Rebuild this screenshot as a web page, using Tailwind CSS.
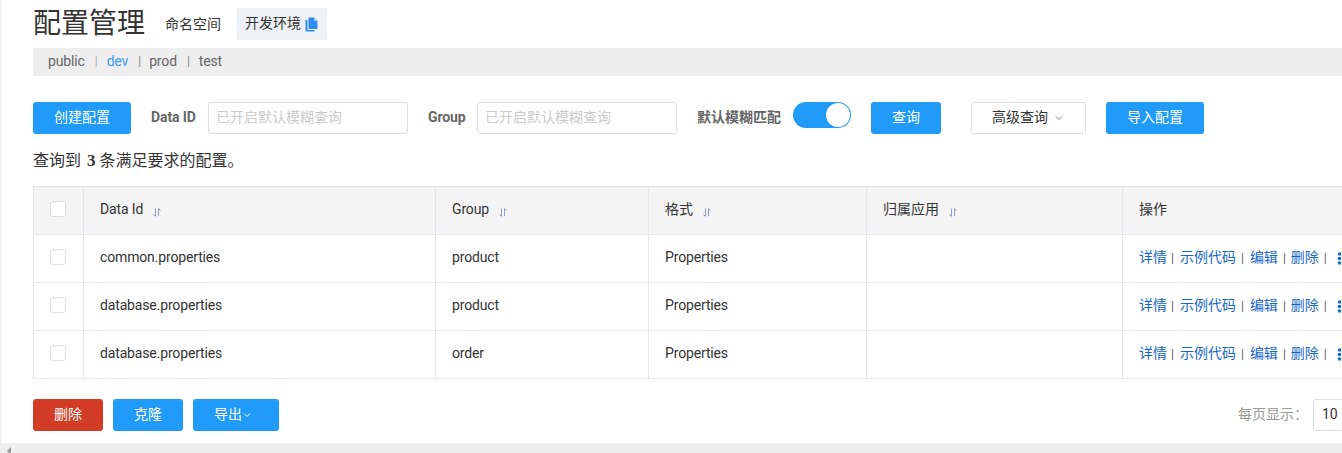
<!DOCTYPE html>
<html lang="zh">
<head>
<meta charset="utf-8">
<script src="https://cdn.jsdelivr.net/npm/@tailwindcss/browser@4"></script>
</head>
<body class="m-0 bg-white">
<div class="w-[1342px] h-[453px] overflow-hidden flex flex-col font-['Roboto','Noto_Sans_CJK_SC',sans-serif] text-[14px] text-[#333]">
  <main class="h-[443px] shrink-0 border-l border-[#eee] pl-[32px] overflow-hidden">
    <div class="w-[1500px]">
      <div class="flex items-center h-[48px] pb-[8px] pt-[8px]">
        <h1 class="text-[28px] leading-[32px] font-normal text-[#333] w-[112px]">配置管理</h1>
        <span class="ml-[20px] text-[#333] leading-[30px]">命名空间</span>
        <span class="ml-[16px] w-[90px] h-[32px] bg-[#eef1f6] flex items-center pl-[8px] gap-[4px] text-[#333]"><span class="pb-[2px]">开发环境</span>
          <svg width="13" height="15" viewBox="0 0 13 15"><path d="M3.5 0.5h5.5l3.5 3.5v8h-9z" fill="#2f8cf0"/><path d="M0.5 3H2.5V13H9.5V14.5H0.5z" fill="#2f8cf0"/><path d="M9 0.5l3.5 3.5H9z" fill="#a8d0f8"/></svg>
        </span>
      </div>
      <div class="h-[28px] bg-[#eee] flex items-center pl-[15px] pb-[2px] text-[#666] w-[1309px]">
        <span class="tracking-[-0.15px]">public</span><span class="ml-[10px] mr-[9px] text-[#aaa] text-[12px]">|</span>
        <span class="text-[#3c9cf5] tracking-[-0.15px]">dev</span><span class="ml-[10px] mr-[8px] text-[#888] text-[12px]">|</span>
        <span class="tracking-[-0.15px]">prod</span><span class="ml-[10px] mr-[9px] text-[#888] text-[12px]">|</span>
        <span class="tracking-[-0.15px]">test</span>
      </div>
      <div class="flex items-center mt-[26px] h-[32px]">
        <button class="w-[98px] h-[32px] pb-[1px] rounded-[3px] bg-[#209bfa] text-white">创建配置</button>
        <label class="ml-[20px] w-[57px] font-bold text-[#666] pb-[1px] tracking-[-0.1px]">Data ID</label>
        <div class="w-[200px] h-[32px] border border-[#dcdee3] rounded-[3px] pl-[8px] leading-[29px] text-[#ccc] -indent-[1px]">已开启默认模糊查询</div>
        <label class="ml-[20px] w-[49px] font-bold text-[#666] pb-[1px] tracking-[-0.1px]">Group</label>
        <div class="w-[200px] h-[32px] border border-[#dcdee3] rounded-[3px] pl-[8px] leading-[29px] text-[#ccc] -indent-[1px]">已开启默认模糊查询</div>
        <label class="ml-[20px] w-[84px] font-bold text-[#666] pb-[1px]">默认模糊匹配</label>
        <div class="ml-[12px] w-[58px] h-[26px] rounded-full bg-[#209bfa] relative -mt-[6px]">
          <span class="absolute right-[1px] top-[1px] w-[24px] h-[24px] rounded-full bg-white"></span>
        </div>
        <button class="ml-[20px] w-[70px] h-[32px] pb-[1px] rounded-[3px] bg-[#209bfa] text-white">查询</button>
        <button class="ml-[30px] w-[115px] h-[32px] pb-[1px] pl-[20px] rounded-[3px] border border-[#dcdee3] bg-white text-[#333] flex items-center gap-[7px]">高级查询
          <svg width="8" height="6" viewBox="0 0 8 6"><path d="M1 1.5l3 3 3-3" fill="none" stroke="#888" stroke-width="1"/></svg>
        </button>
        <button class="ml-[20px] w-[98px] h-[32px] pb-[1px] rounded-[3px] bg-[#209bfa] text-white">导入配置</button>
      </div>
      <p class="mt-[17px] h-[19px] text-[16px] leading-[20px] text-[#333] whitespace-nowrap">查询到 <strong class="ml-[2px] font-['Liberation_Serif',serif] font-bold text-[17px]">3</strong> 条满足要求的配置。</p>
      <table class="mt-[16px] table-fixed border-collapse w-[1400px] text-[#333]">
        <colgroup><col class="w-[50px]"><col class="w-[352px]"><col class="w-[213px]"><col class="w-[218px]"><col class="w-[256px]"><col class="w-[311px]"></colgroup>
        <thead>
          <tr class="h-[48px] bg-[#f4f4f4] border border-[#e6e7eb] text-left">
            <th class="border border-[#e6e7eb] font-normal"><span class="block ml-[16px] mb-[4px] w-[16px] h-[16px] border border-[#dcdee3] rounded-[3px] bg-white"></span></th>
            <th class="border border-[#e6e7eb] font-normal pl-[16px] pb-[2px]"><div class="flex items-center gap-[10px]"><span class="tracking-[-0.15px]">Data Id</span><svg class="mt-[6px]" width="8" height="9" viewBox="0 0 8 9"><path d="M2.5 0.5V8M0.5 6.5L2.5 8.5M5.5 8V0.5L7.5 2.5" fill="none" stroke="#8f9bd0" stroke-width="1"/></svg></div></th>
            <th class="border border-[#e6e7eb] font-normal pl-[16px] pb-[2px]"><div class="flex items-center gap-[10px]"><span class="tracking-[-0.15px]">Group</span><svg class="mt-[6px]" width="8" height="9" viewBox="0 0 8 9"><path d="M2.5 0.5V8M0.5 6.5L2.5 8.5M5.5 8V0.5L7.5 2.5" fill="none" stroke="#8f9bd0" stroke-width="1"/></svg></div></th>
            <th class="border border-[#e6e7eb] font-normal pl-[16px] pb-[2px]"><div class="flex items-center gap-[10px]"><span>格式</span><svg class="mt-[6px]" width="8" height="9" viewBox="0 0 8 9"><path d="M2.5 0.5V8M0.5 6.5L2.5 8.5M5.5 8V0.5L7.5 2.5" fill="none" stroke="#8f9bd0" stroke-width="1"/></svg></div></th>
            <th class="border border-[#e6e7eb] font-normal pl-[16px] pb-[2px]"><div class="flex items-center gap-[10px]"><span>归属应用</span><svg class="mt-[6px]" width="8" height="9" viewBox="0 0 8 9"><path d="M2.5 0.5V8M0.5 6.5L2.5 8.5M5.5 8V0.5L7.5 2.5" fill="none" stroke="#8f9bd0" stroke-width="1"/></svg></div></th>
            <th class="border border-[#e6e7eb] font-normal pl-[16px] pb-[2px]">操作</th>
          </tr>
        </thead>
        <tbody>
          <tr class="h-[48px]">
            <td class="border border-[#e6e7eb]"><span class="block ml-[16px] mb-[4px] w-[16px] h-[16px] border border-[#dcdee3] rounded-[3px] bg-white"></span></td>
            <td class="border border-[#e6e7eb] pl-[16px] pb-[2px] tracking-[-0.15px]">common.properties</td>
            <td class="border border-[#e6e7eb] pl-[16px] pb-[2px] tracking-[-0.15px]">product</td>
            <td class="border border-[#e6e7eb] pl-[16px] pb-[2px] tracking-[-0.15px]">Properties</td>
            <td class="border border-[#e6e7eb]"></td>
            <td class="border border-[#e6e7eb] pl-[16px] pb-[2px]"><div class="flex items-center text-[#1668c8]"><span>详情</span><span class="ml-[4px] mr-[6px] text-[#555] text-[12px]">|</span><span>示例代码</span><span class="ml-[5px] mr-[6px] text-[#555] text-[12px]">|</span><span>编辑</span><span class="ml-[5px] mr-[5px] text-[#555] text-[12px]">|</span><span>删除</span><span class="ml-[5px] mr-[6px] text-[#555] text-[12px]">|</span><svg class="ml-[4px] mt-[1px]" width="5" height="13" viewBox="0 0 5 13"><circle cx="2.5" cy="2" r="1.8" fill="#1668c8"/><circle cx="2.5" cy="6.5" r="1.8" fill="#1668c8"/><circle cx="2.5" cy="11" r="1.8" fill="#1668c8"/></svg></div></td>
          </tr>
          <tr class="h-[48px]">
            <td class="border border-[#e6e7eb]"><span class="block ml-[16px] mb-[4px] w-[16px] h-[16px] border border-[#dcdee3] rounded-[3px] bg-white"></span></td>
            <td class="border border-[#e6e7eb] pl-[16px] pb-[2px] tracking-[-0.15px]">database.properties</td>
            <td class="border border-[#e6e7eb] pl-[16px] pb-[2px] tracking-[-0.15px]">product</td>
            <td class="border border-[#e6e7eb] pl-[16px] pb-[2px] tracking-[-0.15px]">Properties</td>
            <td class="border border-[#e6e7eb]"></td>
            <td class="border border-[#e6e7eb] pl-[16px] pb-[2px]"><div class="flex items-center text-[#1668c8]"><span>详情</span><span class="ml-[4px] mr-[6px] text-[#555] text-[12px]">|</span><span>示例代码</span><span class="ml-[5px] mr-[6px] text-[#555] text-[12px]">|</span><span>编辑</span><span class="ml-[5px] mr-[5px] text-[#555] text-[12px]">|</span><span>删除</span><span class="ml-[5px] mr-[6px] text-[#555] text-[12px]">|</span><svg class="ml-[4px] mt-[1px]" width="5" height="13" viewBox="0 0 5 13"><circle cx="2.5" cy="2" r="1.8" fill="#1668c8"/><circle cx="2.5" cy="6.5" r="1.8" fill="#1668c8"/><circle cx="2.5" cy="11" r="1.8" fill="#1668c8"/></svg></div></td>
          </tr>
          <tr class="h-[48px]">
            <td class="border border-[#e6e7eb]"><span class="block ml-[16px] mb-[4px] w-[16px] h-[16px] border border-[#dcdee3] rounded-[3px] bg-white"></span></td>
            <td class="border border-[#e6e7eb] pl-[16px] pb-[2px] tracking-[-0.15px]">database.properties</td>
            <td class="border border-[#e6e7eb] pl-[16px] pb-[2px] tracking-[-0.15px]">order</td>
            <td class="border border-[#e6e7eb] pl-[16px] pb-[2px] tracking-[-0.15px]">Properties</td>
            <td class="border border-[#e6e7eb]"></td>
            <td class="border border-[#e6e7eb] pl-[16px] pb-[2px]"><div class="flex items-center text-[#1668c8]"><span>详情</span><span class="ml-[4px] mr-[6px] text-[#555] text-[12px]">|</span><span>示例代码</span><span class="ml-[5px] mr-[6px] text-[#555] text-[12px]">|</span><span>编辑</span><span class="ml-[5px] mr-[5px] text-[#555] text-[12px]">|</span><span>删除</span><span class="ml-[5px] mr-[6px] text-[#555] text-[12px]">|</span><svg class="ml-[4px] mt-[1px]" width="5" height="13" viewBox="0 0 5 13"><circle cx="2.5" cy="2" r="1.8" fill="#1668c8"/><circle cx="2.5" cy="6.5" r="1.8" fill="#1668c8"/><circle cx="2.5" cy="11" r="1.8" fill="#1668c8"/></svg></div></td>
          </tr>
        </tbody>
      </table>
      <div class="flex items-center mt-[20px] h-[32px] w-[1400px]">
        <button class="w-[70px] h-[32px] pb-[1px] rounded-[3px] bg-[#d23c26] text-white">删除</button>
        <button class="ml-[10px] w-[70px] h-[32px] pb-[1px] rounded-[3px] bg-[#209bfa] text-white">克隆</button>
        <button class="ml-[10px] w-[86px] h-[32px] pb-[1px] pl-[21px] rounded-[3px] bg-[#209bfa] text-white flex items-center gap-[1px]">导出<svg width="8" height="6" viewBox="0 0 8 6"><path d="M1 1.5l3 3 3-3" fill="none" stroke="#fff" stroke-width="1"/></svg></button>
        <span class="ml-[959px] text-[#999] pb-[1px]">每页显示：</span>
        <div class="ml-[5px] w-[60px] h-[32px] border border-[#dcdee3] rounded-[3px] pl-[8px] leading-[29px] text-[#333]">10</div>
      </div>
    </div>
  </main>
  <div class="h-[10px] bg-[#eee] flex items-start pt-[4px] pl-[7px]">
    <svg width="4" height="8" viewBox="0 0 4 8"><path d="M4 0v8L0 4z" fill="#999"/></svg>
  </div>
</div>
</body>
</html>
